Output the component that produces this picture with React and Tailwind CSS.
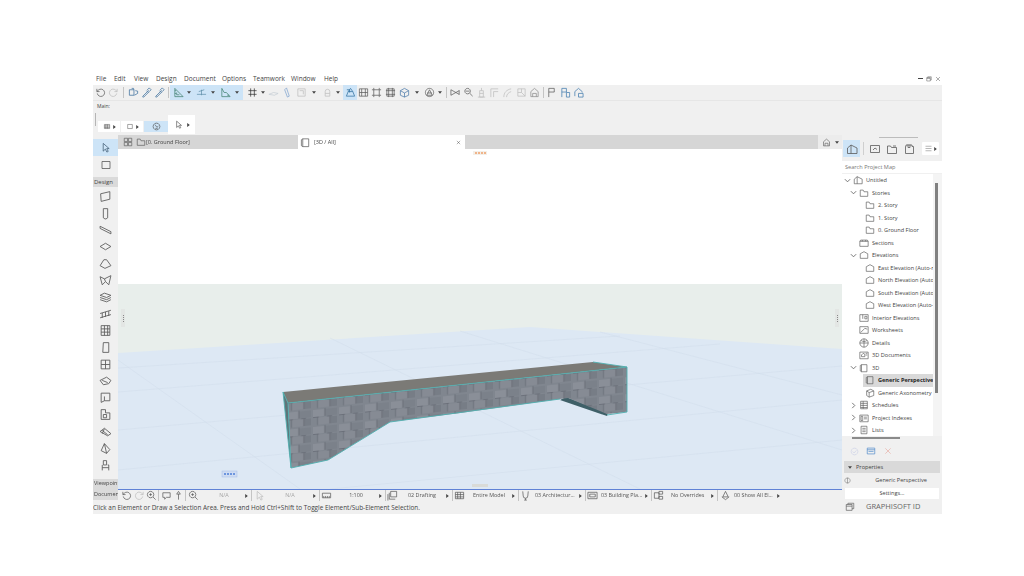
const icons = {
  undo: "M2.5 7a4 4 0 1 0 1.2-3.6L2 5M2 2v3h3",
  redo: "M9.5 7a4 4 0 1 1-1.2-3.6L10 5M10 2v3H7",
  find: "M1.5 3h5v6h-5zM4 1.5h2l.5 1.5M7 9l3.5-2V4.5L8 4",
  dropper: "M2 10l5-5 1 1-5 5H2zM7 3l2-2 2 2-2 2zM6 4l2 2",
  tri: "M2 1.5v9h9zM4 6v2.5h3M2 4h1.5M2 7h1.5",
  line: "M1 8h10M3 5l6-2M6 3v6",
  tri2: "M2 1.5v9h9L7 6H4.5zM8 9h2",
  grid: "M4 1.5v9M8 1.5v9M1.5 4h9M1.5 8h9",
  flat: "M1 8l5-2 5 1-4 2z",
  prism: "M6 1l3 9-2 1-3-8z",
  cube: "M2 2h8v8H2z M4 4h4v4",
  bell: "M3.5 5a2.5 2.5 0 0 1 5 0v5h-5zM3.5 7h5",
  persp: "M1.5 10l2-5h5l2 5zM3.5 5l2.5-3.5L8.5 5M2 3h3v3",
  plan: "M1.5 2h9v8h-9zM4 2v8M8 2v8M1.5 6h9",
  quad: "M1.5 1.5h4v4h-4zM6.5 1.5h4v4h-4zM1.5 6.5h4v4h-4zM6.5 6.5h4v4h-4z",
  frame: "M3 3h6v6H3zM1 3h2M1 9h2M9 3h2M9 9h2M3 1v2M9 1v2M3 9v2M9 9v2",
  stack: "M2 2h8v8H2zM4 1v10M8 1v10M1 4h10M1 8h10",
  iso: "M6 1.5l4.5 2.5v5L6 11 1.5 9V4zM1.5 4L6 6.5 10.5 4M6 6.5V11",
  circle: "M6 1.5a4.5 4.5 0 1 0 .01 0zM3 9l3-6 3 6zM3.5 6.5h5",
  scissors: "M1 3l9 5M1 9l9-5M1 3v6M10 3.5v5",
  mag: "M5 1.5a3 3 0 1 0 .01 0zM7 6.5l3.5 3.5M3 4.5h4",
  tower: "M6 1v3M4 4h4v7H4zM2 11h8M4 7h4",
  corner: "M2 11V2h8M5 11V5h5",
  arc: "M2 11C2 6 5 3 10 2M5 11C5 8 7 6 10 5",
  square: "M2 2h8v8H2zM2 6h4V2M6 6l4 4",
  house: "M2 10.5V5l4-3.5L10 5v5.5zM4 10.5V7h4v3.5",
  flag: "M3 11V1.5h6v4H3",
  fdoc: "M2 11V1.5h5M7 1.5v4H2M7 6h3.5v5H7z",
  gdoc: "M2 10V5l4-3.5L10 5v1M6 7h5v4H6z",
  arrow: "M3.5 1.5v8.5l2.3-2.2 1.7 3.2 1.5-.8-1.7-3H10z",
  marquee: "M2 2.5h8v7H2z",
  wall: "M1.5 3.5L10 1.5v7L2 10.5z",
  col: "M4 1.5h4v8.5l-1.5 1h-1L4 10z",
  beam: "M1 3l10 5v2L1 5z",
  slab: "M1 6l5-3 5 3-5 3z",
  roof: "M1 8l3.5-5.5H7L11 8 5.5 10.5z",
  mesh: "M1 2.5l4 2 6-3-2 8.5-3-3-3 3zM5 4.5L6 7",
  stair: "M1 4l4-2 6 2-4 2zM1 6l6 2 4-2M1 8l6 2 4-2",
  rail: "M1 6l10-3M1 10l10-3M3 5.500v4.500M6 4.500v4.500M9 3.800v4.500",
  curtain: "M2 1.500h8v9H2zM5 1.500v9M8 1.500v9M2 4.500h8M2 7.500h8",
  door: "M4 1.500h5v9H3.500z",
  win: "M2 2h8v8H2zM6 2v8M2 6h8",
  skylight: "M1 5l6-3 4 3-2 3-5 1zM3 5l5 2",
  corner2: "M2 2h8v7H5l-3 1.500zM5 9V5",
  zone: "M2 1.500h4v3h4v6H2zM4 6h3v3H4z",
  shell: "M1 6l4-3 6 5-3 2zM3 5l5 4M5 3.500L3 8",
  morph: "M5 1.500L10 7l-3 3.500L2 8zM5 1.500L7 10.500",
  chair: "M4 1.500h3v4H4zM3 5.500v5M8 5.500h1v5M3 8h6",
  chat: "M2 3h8v5H6l-2 2V8H2z",
  pin: "M6 1.500l2 3H4zM6 4.500v6",
  magnifier: "M5 1.500a3.500 3.500 0 1 0 .01 0zM7.500 7.500l3 3M3.500 5h3M5 3.500v3",
  rect: "M1.500 3.500h9v5h-9zM3 8.500v-2M5 8.500v-2M7 8.500v-2M9 8.500v-2",
  layers: "M4 1.500h6.500v6H4zM2.500 3v7h6.500M1 4.500v7",
  table: "M1.500 2.500h9v7h-9zM1.500 5h9M1.500 7.500h9M4 2.500v7M7 2.500v7",
  shield: "M3 1.500l.500 5a2.500 2.500 0 0 0 5 0l.500-5M6 9v2M4.500 11h3",
  sheet: "M1 2.500h10v7H1zM3 4.500h6v3H3z",
  overrides: "M1.500 3h5v6h-5zM6.500 1.500h4v3h-4zM6.500 7h4v3h-4z",
  show: "M6 1.500l3 6H3zM2 7.500l4 3 4-3",
  nav: "M1.500 10.500V5L5 2l6 3v5.500zM5 2v8.500",
  views: "M1.500 2.500h9v7h-9zM4 7l2-2 2 1.500",
  pages: "M1.500 3h3l1 1.500h5v6h-9zM7 3h3",
  book: "M3 2h6v1.500h1.500v7h-8v-7H3zM5 1.500v3h2v-3",
  menu: "M2 3h8M2 6h8M2 9h8",
  folder: "M1.500 10V2.500h3.500L6 4.500h4.500V10z",
  section: "M1 4l1-1.500h8L11 4v6H1zM1 4h10M4 2.500V4M8 2.500V4",
  pent: "M1.500 10V4.500L6 2l4.500 2.500V10z",
  interior: "M1 2h10v8H1zM4.500 2v5M7 4h2.500v3H7z",
  worksheet: "M1 2h10v8H1zM2 9l5-5 3 1",
  globe: "M6 1a5 5 0 1 0 .01 0zM1 6h10M6 1v10M2.500 3c2 1.500 5 1.500 7 0",
  docs: "M1 2.500h10v8H1zM3 6l2-2 2 1v3H3zM8 4h2M8 6h2",
  box3d: "M3 2h6.500v8.500H3zM1.500 3L3 2M1.500 3v6.500L3 10.500",
  boxIso: "M2 3.500L7 1.500l3.500 2v5.500L5 11 2 9zM2 3.500l3 2 5.500-2M5 5.500V11",
  sched: "M2 1.500h8v9H2zM2 4h8M2 6.500h8M2 9h8M5 1.500v9",
  index: "M1 2.500h10v8H1zM2.500 4h2v5h-2zM6 5h3.500M6 7h3.500",
  list: "M2.500 1.500h7v9h-7zM4 4h4M4 6h4M4 8h4",
  windows: "M1.500 3h7v7h-7zM3.500 3V1.500h7v6.500H8.500M1.500 5h7",
  ok: "M6 1.500a4.500 4.500 0 1 0 .01 0zM3.500 6l2 2 3-3.500",
  close: "M2 2l8 8M10 2l-8 8",
  panel: "M1.500 2.500h9v7h-9zM1.500 4.500h9M3 6.500h6",
  half: "M6 1.500a4.500 4.500 0 1 0 .01 0zM6 1.500v9",
  swirl: "M6 1.500a4.500 4.500 0 1 0 .01 0zM4 3.500l2.500 3.500 2-1.500M4.500 8.500h3",
};

const Ic = ({ name, size = "h-[11px] w-[11px]", color = "#5a5a5a" }) => (
  <svg viewBox="0 0 12 12" className={`${size} shrink-0`} fill="none" stroke={color} strokeWidth="0.8">
    <path d={icons[name]} />
  </svg>
);

const CaretDown = () => (
  <svg viewBox="0 0 6 4" className="h-[3px] w-[4px]" fill="#444">
    <path d="M0 0h6L3 4z" />
  </svg>
);

const CaretRight = () => (
  <svg viewBox="0 0 4 6" className="h-[4px] w-[3px] shrink-0" fill="#444">
    <path d="M0 0l4 3-4 3z" />
  </svg>
);

const Chevron = ({ open }) => (
  <svg viewBox="0 0 8 8" className="h-[7px] w-[7px]" fill="none" stroke="#666" strokeWidth="1">
    <path d={open ? "M1 2.500l3 3 3-3" : "M2.500 1l3 3-3 3"} />
  </svg>
);

const Sep = ({ w = "w-[4px]" }) => (
  <div className={`${w} flex h-full items-center justify-center`}>
    <div className="h-[11px] w-px bg-[#c4c4c4]" />
  </div>
);

const Cell = ({ name, w, color }) => (
  <div className={`${w} flex h-full shrink-0 items-center justify-center`}>
    <Ic name={name} color={color} />
  </div>
);

const Down = ({ w = "w-[8px]" }) => (
  <div className={`${w} flex h-full shrink-0 items-center justify-center`}>
    <CaretDown />
  </div>
);

const MenuBar = () => (
  <div className="flex h-[13px] items-center bg-white text-[6.5px] text-[#444]">
    <div className="flex items-center">
      {[
        ["File", "w-[18px] pl-[3px]"],
        ["Edit", "w-[20px] pl-[3px]"],
        ["View", "w-[22px] pl-[3px]"],
        ["Design", "w-[28px] pl-[3px]"],
        ["Document", "w-[38px] pl-[3px]"],
        ["Options", "w-[31px] pl-[3px]"],
        ["Teamwork", "w-[38px] pl-[3px]"],
        ["Window", "w-[33px] pl-[3px]"],
        ["Help", "w-[20px] pl-[3px]"],
      ].map(([label, w]) => (
        <span key={label} className={w}>
          {label}
        </span>
      ))}
    </div>
    <div className="ml-auto flex items-center gap-[3px] pr-[1px]">
      <div className="h-px w-[5px] bg-[#444]" />
      <Ic name="windows" size="h-[6px] w-[6px]" color="#333" />
      <Ic name="close" size="h-[6px] w-[6px]" color="#333" />
    </div>
  </div>
);

const ToolBar = () => (
  <div className="flex h-[15px] items-center bg-[#f0f0f0]">
    <div className="w-px" />
    <Cell name="undo" w="w-[13px]" />
    <Cell name="redo" w="w-[13px]" color="#bdbdbd" />
    <Sep w="w-[6px]" />
    <Cell name="find" w="w-[14px]" color="#3b6e9c" />
    <Cell name="dropper" w="w-[13px]" color="#3b6e9c" />
    <Cell name="dropper" w="w-[13px]" color="#3b6e9c" />
    <Sep />
    <div className="flex h-full w-[73px] items-center bg-[#cde4f7] pl-[1px]">
      <Cell name="tri" w="w-[14px]" color="#3f7f6f" />
      <Down />
      <Cell name="line" w="w-[16px]" color="#5e8fa8" />
      <Down />
      <Cell name="tri2" w="w-[16px]" color="#3f7f6f" />
      <Down />
    </div>
    <div className="w-[2px]" />
    <Cell name="grid" w="w-[14px]" color="#333" />
    <Down />
    <Cell name="flat" w="w-[13px]" color="#c5cdd4" />
    <Cell name="prism" w="w-[12px]" color="#7fa3cf" />
    <div className="w-[2px]" />
    <Cell name="cube" w="w-[14px]" color="#bdbdbd" />
    <Down w="w-[12px]" />
    <Cell name="bell" w="w-[14px]" color="#bdbdbd" />
    <Down />
    <div className="w-px" />
    <div className="flex h-full w-[14px] items-center justify-center bg-[#cde4f7]">
      <Ic name="persp" color="#2f6f9f" />
    </div>
    <Cell name="plan" w="w-[13px]" />
    <Cell name="frame" w="w-[13px]" />
    <Cell name="stack" w="w-[14px]" />
    <Cell name="iso" w="w-[14px]" color="#4a78a8" />
    <Down w="w-[11px]" />
    <Cell name="circle" w="w-[14px]" />
    <Down />
    <Sep />
    <div className="w-px" />
    <Cell name="scissors" w="w-[13px]" />
    <Cell name="mag" w="w-[13px]" />
    <Cell name="tower" w="w-[13px]" color="#bdbdbd" />
    <Cell name="corner" w="w-[13px]" color="#bdbdbd" />
    <Cell name="arc" w="w-[13px]" color="#bdbdbd" />
    <div className="w-px" />
    <Cell name="square" w="w-[13px]" color="#bdbdbd" />
    <Cell name="house" w="w-[13px]" color="#8a8a8a" />
    <Sep />
    <Cell name="flag" w="w-[13px]" />
    <div className="w-px" />
    <Cell name="fdoc" w="w-[13px]" color="#3f78ad" />
    <Cell name="gdoc" w="w-[13px]" color="#3f78ad" />
  </div>
);

const MainBar = () => (
  <div className="flex h-[35px] flex-col border-t border-[#e6e6e6] bg-[#f0f0f0]">
    <span className="pl-[4px] pt-[1px] text-[5px] leading-[8px] text-[#444]">Main:</span>
    <div className="flex items-start">
      <div className="ml-[2px] mt-[3px] h-[13px] w-px bg-[#b5b5b5]" />
      <div className="ml-[2px] mt-[11px] flex h-[11px] w-[22px] items-center justify-center gap-[2px] bg-white">
        <Ic name="table" size="h-[7px] w-[8px]" color="#444" />
        <CaretRight />
      </div>
      <div className="ml-px mt-[11px] flex h-[11px] w-[22px] items-center justify-center gap-[2px] bg-white">
        <Ic name="marquee" size="h-[7px] w-[8px]" color="#444" />
        <CaretRight />
      </div>
      <div className="ml-px mt-[11px] flex h-[11px] w-[24px] items-center justify-center bg-[#cde4f7]">
        <Ic name="swirl" size="h-[9px] w-[9px]" color="#444" />
      </div>
      <div className="mt-[5px] flex h-[19px] w-[27px] items-center justify-center gap-[4px] bg-white">
        <Ic name="arrow" size="h-[9px] w-[9px]" color="#444" />
        <CaretRight />
      </div>
    </div>
  </div>
);

const toolIcons = ["wall", "col", "beam", "slab", "roof", "mesh", "stair", "rail", "curtain", "door", "win", "skylight", "corner2", "zone", "shell", "morph", "chair"];

const ToolColumn = () => (
  <div className="flex h-full w-[25px] shrink-0 flex-col bg-[#f0f0f0] text-[6px] text-[#444]">
    <div className="h-[4px]" />
    <div className="flex h-[17px] items-center justify-center bg-[#cde4f7]">
      <Ic name="arrow" size="h-[11px] w-[11px]" color="#3d5870" />
    </div>
    <div className="flex h-[18px] items-center justify-center">
      <Ic name="marquee" size="h-[12px] w-[12px]" />
    </div>
    <div className="mt-[3px] flex h-[10px] items-center bg-[#dadada] pl-[1px]">Design</div>
    <div className="h-[1px]" />
    {toolIcons.map((name, i) => (
      <div key={name + i} className="flex h-[16.8px] items-center justify-center">
        <Ic name={name} size="h-[13px] w-[13px]" />
      </div>
    ))}
    <div className="h-[5px]" />
    <div className="flex h-[10px] items-center overflow-hidden whitespace-nowrap bg-[#dadada] pl-[1px] text-[5.5px]">Viewpoints</div>
    <div className="flex h-[11px] items-center overflow-hidden whitespace-nowrap bg-[#dadada] pl-[1px] text-[5.5px]">Documents</div>
  </div>
);

const TabBar = () => (
  <div className="flex h-[14px] items-stretch text-[5.5px] text-[#444]">
    <div className="flex w-[180px] items-center bg-[#d6d6d6] pl-[2px]">
      <div className="flex w-[16px] justify-center">
        <Ic name="quad" size="h-[10px] w-[10px]" />
      </div>
      <Ic name="folder" size="h-[10px] w-[10px]" />
      <span>[0. Ground Floor]</span>
    </div>
    <div className="flex w-[167px] items-center bg-white pl-[2px]">
      <Ic name="box3d" size="h-[11px] w-[11px]" />
      <span className="ml-[3px]">[3D / All]</span>
      <div className="ml-auto pr-[4px]">
        <Ic name="close" size="h-[5px] w-[5px]" color="#111" />
      </div>
    </div>
    <div className="flex-1 bg-[#d6d6d6]" />
    <div className="flex w-[24px] items-center justify-center gap-[3px] bg-[#ececec]">
      <Ic name="house" size="h-[9px] w-[11px]" />
      <CaretDown />
    </div>
  </div>
);

const Bridge = () => (
  <svg viewBox="118 149 724 340" className="block h-full w-full">
    <defs>
      <pattern id="stone" width="26" height="17" patternUnits="userSpaceOnUse" patternTransform="skewY(-6)">
        <rect width="26" height="17" fill="#80868f" />
        <rect x="1" y="1" width="11" height="7" fill="#8a8f98" />
        <rect x="13" y="1" width="12" height="7" fill="#7b818a" />
        <rect x="6" y="9" width="11" height="7" fill="#868b94" />
        <rect x="18" y="9" width="7" height="7" fill="#777d86" />
        <path d="M13 0v8M5.500 8.500v8M18 9v7M1 8.500h6M15 8.500h5" stroke="#5a5f68" strokeWidth="0.5" fill="none" />
      </pattern>
    </defs>
    <rect x="118" y="149" width="724" height="135" fill="#ffffff" />
    <rect x="118" y="284" width="724" height="205" fill="#e8eeeb" />
    <polygon points="118,353 530,327 842,349 842,489 118,489" fill="#dde8f4" />
    <g stroke="#d0dcea" strokeWidth="0.5" fill="none">
      <path d="M118 368L620 336M118 392L720 344M118 430L842 366M118 470L842 400M330 489L842 440" />
      <path d="M118 360L300 489M330 338L640 489M460 331L842 450M600 332L842 395" />
    </g>
    <polygon points="283,392 593,362 627,367 288,403" fill="#7b7a76" />
    <polygon points="283,392 288,403 291,468" fill="#5f7478" />
    <polygon points="566,397 608,413 607,416 560,400" fill="#3f6068" />
    <polygon points="288,403 627,367 627,412 607,414 568,398 560,399 460,413 390,422 328,460 291,468" fill="url(#stone)" />
    <path d="M283 392L288 403L627 367M283 392L291 468M288 403L291 468L328 460L390 422L560 399M607 415L627 412V367L593 362" fill="none" stroke="#4fb0b0" strokeWidth="0.9" />
    <rect x="222" y="471" width="15" height="6" fill="#cfdcf2" stroke="#9ab4e6" strokeWidth="0.4" />
    <path d="M224 474h11" stroke="#6c95de" strokeWidth="2" strokeDasharray="2 1" />
  </svg>
);

const Canvas = () => (
  <div className="relative h-[340px] overflow-hidden">
    <Bridge />
    <div className="absolute left-[355px] top-[2px] flex h-[4px] w-[14px] items-center justify-center gap-[1px] bg-[#f3efe9]">
      {[0, 1, 2, 3].map((i) => (
        <div key={i} className="h-[2px] w-[2px] bg-[#f0b48a]" />
      ))}
    </div>
    <div className="absolute left-[3px] top-[160px] flex h-[18px] w-[4px] flex-col items-center justify-center gap-[1px] bg-[#e3e6e4]">
      {[0, 1, 2, 3].map((i) => (
        <div key={i} className="h-px w-px bg-[#888]" />
      ))}
    </div>
    <div className="absolute right-[3px] top-[160px] flex h-[18px] w-[4px] flex-col items-center justify-center gap-[1px] bg-[#e3e6e4]">
      {[0, 1, 2, 3].map((i) => (
        <div key={i} className="h-px w-px bg-[#888]" />
      ))}
    </div>
    <div className="absolute bottom-[2px] left-[354px] h-[3px] w-[16px] bg-[#d9dbd8]" />
  </div>
);

const segments = [
  { icon: "rect", w: "w-[11px]", label: "1:100", cls: "w-[45px] pl-[3px] text-center" },
  { icon: "layers", w: "w-[11px]", label: "02 Drafting", cls: "w-[46px] pl-[10px]" },
  { icon: "table", w: "w-[11px]", label: "Entire Model", cls: "w-[45px] pl-[8px]" },
  { icon: "shield", w: "w-[11px]", label: "03 Architectur...", cls: "w-[46px] pl-[4px]" },
  { icon: "sheet", w: "w-[11px]", label: "03 Building Pla...", cls: "w-[45px] pl-[3px]" },
  { icon: "overrides", w: "w-[11px]", label: "No Overrides", cls: "w-[45px] pl-[7px]" },
  { icon: "show", w: "w-[12px]", label: "00 Show All El...", cls: "w-[44px] pl-[3px]" },
];

const NavBar = () => (
  <div className="flex h-[12px] items-center border-t border-[#5f82d6] bg-[#f0f0f0] text-[5.4px] text-[#555]">
    <div className="w-[2px]" />
    <Cell name="undo" w="w-[12px]" />
    <div className="w-px" />
    <Cell name="redo" w="w-[12px]" color="#bdbdbd" />
    <Cell name="magnifier" w="w-[12px]" />
    <Sep w="w-[3px]" />
    <Cell name="chat" w="w-[12px]" />
    <Cell name="pin" w="w-[12px]" />
    <Sep w="w-[3px]" />
    <Cell name="magnifier" w="w-[12px]" />
    <span className="w-[44px] whitespace-nowrap pl-[6px] text-center text-[#a5a5a5]">N/A</span>
    <div className="flex w-[6px] justify-center">
      <CaretRight />
    </div>
    <Sep />
    <Cell name="arrow" w="w-[12px]" color="#bdbdbd" />
    <span className="w-[46px] whitespace-nowrap pl-[4px] text-center text-[#a5a5a5]">N/A</span>
    <div className="flex w-[6px] justify-center">
      <CaretRight />
    </div>
    <Sep />
    {segments.map((s, i) => (
      <div key={s.label} className="flex h-full items-center">
        <Cell name={s.icon} w={s.w} />
        <span className={`${s.cls} overflow-hidden whitespace-nowrap`}>{s.label}</span>
        <div className="flex w-[6px] justify-center">
          <CaretRight />
        </div>
        {i < segments.length - 1 && <Sep />}
      </div>
    ))}
  </div>
);

const tree = [
  { label: "Untitled", icon: "nav", pad: "pl-[2px]", chev: "down" },
  { label: "Stories", icon: "folder", pad: "pl-[8px]", chev: "down" },
  { label: "2. Story", icon: "folder", pad: "pl-[14px]", chev: "none" },
  { label: "1. Story", icon: "folder", pad: "pl-[14px]", chev: "none" },
  { label: "0. Ground Floor", icon: "folder", pad: "pl-[14px]", chev: "none" },
  { label: "Sections", icon: "section", pad: "pl-[8px]", chev: "none" },
  { label: "Elevations", icon: "pent", pad: "pl-[8px]", chev: "down" },
  { label: "East Elevation (Auto-rebuild Model)", icon: "pent", pad: "pl-[14px]", chev: "none" },
  { label: "North Elevation (Auto-rebuild Model)", icon: "pent", pad: "pl-[14px]", chev: "none" },
  { label: "South Elevation (Auto-rebuild Model)", icon: "pent", pad: "pl-[14px]", chev: "none" },
  { label: "West Elevation (Auto-rebuild Model)", icon: "pent", pad: "pl-[14px]", chev: "none" },
  { label: "Interior Elevations", icon: "interior", pad: "pl-[8px]", chev: "none" },
  { label: "Worksheets", icon: "worksheet", pad: "pl-[8px]", chev: "none" },
  { label: "Details", icon: "globe", pad: "pl-[8px]", chev: "none" },
  { label: "3D Documents", icon: "docs", pad: "pl-[8px]", chev: "none" },
  { label: "3D", icon: "box3d", pad: "pl-[8px]", chev: "down" },
  { label: "Generic Perspective", icon: "box3d", pad: "pl-[14px]", chev: "none", selected: true },
  { label: "Generic Axonometry", icon: "boxIso", pad: "pl-[14px]", chev: "none" },
  { label: "Schedules", icon: "sched", pad: "pl-[8px]", chev: "right" },
  { label: "Project Indexes", icon: "index", pad: "pl-[8px]", chev: "right" },
  { label: "Lists", icon: "list", pad: "pl-[8px]", chev: "right" },
];

const TreeRow = ({ row }) => (
  <div className={`${row.pad} flex h-[12.5px] items-center`}>
    <div className="flex w-[7px] shrink-0 justify-center">
      {row.chev === "down" && <Chevron open />}
      {row.chev === "right" && <Chevron />}
    </div>
    <div className={`${row.selected ? "bg-[#d9d9d9] font-bold text-[#222]" : ""} flex h-full min-w-0 flex-1 items-center overflow-hidden whitespace-nowrap`}>
      <div className="flex w-[14px] shrink-0 justify-center">
        <Ic name={row.icon} size="h-[10px] w-[10px]" />
      </div>
      <span className="ml-px">{row.label}</span>
    </div>
  </div>
);

const RightPanel = () => (
  <div className="flex h-full w-[100px] shrink-0 flex-col bg-[#f0f0f0] text-[5.6px] text-[#444]">
    <div className="flex h-[5px] items-start justify-center pl-[12px]">
      <div className="mt-[2px] h-px w-[39px] bg-[#bcbcbc]" />
    </div>
    <div className="flex h-[17px] items-stretch">
      <div className="ml-px flex w-[17px] items-center justify-center bg-[#cde4f7]">
        <Ic name="nav" size="h-[12px] w-[12px]" />
      </div>
      <div className="mx-[3px] my-[2px] w-px bg-[#cfcfcf]" />
      <div className="flex w-[16px] items-center justify-center">
        <Ic name="views" size="h-[12px] w-[12px]" />
      </div>
      <div className="flex w-[17px] items-center justify-center">
        <Ic name="pages" size="h-[12px] w-[12px]" />
      </div>
      <div className="flex w-[17px] items-center justify-center">
        <Ic name="book" size="h-[12px] w-[12px]" />
      </div>
      <div className="my-[2px] ml-[5px] flex w-[17px] items-center justify-center gap-px rounded-[1px] bg-white">
        <Ic name="menu" size="h-[9px] w-[9px]" color="#888" />
        <CaretRight />
      </div>
    </div>
    <div className="mt-[4px] flex h-[12px] items-center bg-white pl-[3px] text-[#777]">Search Project Map</div>
    <div className="mt-px flex h-[262px] bg-white">
      <div className="w-[91px] overflow-hidden">
        {tree.map((row) => (
          <TreeRow key={row.label} row={row} />
        ))}
      </div>
      <div className="w-[9px] bg-[#f4f4f4] pl-[2px] pt-[9px]">
        <div className="h-[210px] w-[3px] bg-[#808080]" />
      </div>
    </div>
    <div className="ml-[10px] mt-[1px] h-[2px] w-[48px] bg-[#8a8a8a]" />
    <div className="mt-[6px] flex h-[12px] items-center gap-[5px] pl-[6px]">
      <div className="flex w-[12px] justify-center">
        <Ic name="ok" size="h-[9px] w-[9px]" color="#c9cfe6" />
      </div>
      <div className="flex w-[12px] justify-center">
        <Ic name="panel" size="h-[10px] w-[10px]" color="#4a86c8" />
      </div>
      <div className="flex w-[12px] justify-center">
        <Ic name="close" size="h-[8px] w-[8px]" color="#e59a90" />
      </div>
    </div>
    <div className="mx-[2px] mt-[4px] flex h-[12px] items-center gap-[4px] bg-[#d9d9d9] pl-[4px]">
      <CaretDown />
      <span className="text-[#444]">Properties</span>
    </div>
    <div className="flex h-[15px] items-center pl-[2px]">
      <Ic name="half" size="h-[7px] w-[7px]" />
      <span className="flex-1 pl-[9px] text-center">Generic Perspective</span>
    </div>
    <div className="mx-[3px] flex h-[11px] items-center justify-center bg-white">Settings...</div>
    <div className="mt-[1px] flex h-[13px] items-center pl-[3px] text-[7.5px] text-[#666]">
      <Ic name="windows" size="h-[10px] w-[10px]" />
      <span className="ml-[11px]">GRAPHISOFT ID</span>
    </div>
  </div>
);

export default function App() {
  return (
    <div className="h-[576px] w-[1024px] overflow-hidden bg-white pl-[93px] pt-[72px] font-['Open_Sans',sans-serif]">
      <div className="flex h-[442px] w-[849px] flex-col blur-[0.4px]">
        <MenuBar />
        <ToolBar />
        <MainBar />
        <div className="flex h-[379px]">
          <div className="flex w-[749px] flex-col">
            <div className="flex h-[366px]">
              <ToolColumn />
              <div className="flex w-[724px] flex-col">
                <TabBar />
                <Canvas />
                <NavBar />
              </div>
            </div>
            <div className="flex h-[13px] items-center whitespace-nowrap bg-[#f0f0f0] text-[6.4px] text-[#444]">
              Click an Element or Draw a Selection Area. Press and Hold Ctrl+Shift to Toggle Element/Sub-Element Selection.
            </div>
          </div>
          <RightPanel />
        </div>
      </div>
    </div>
  );
}
